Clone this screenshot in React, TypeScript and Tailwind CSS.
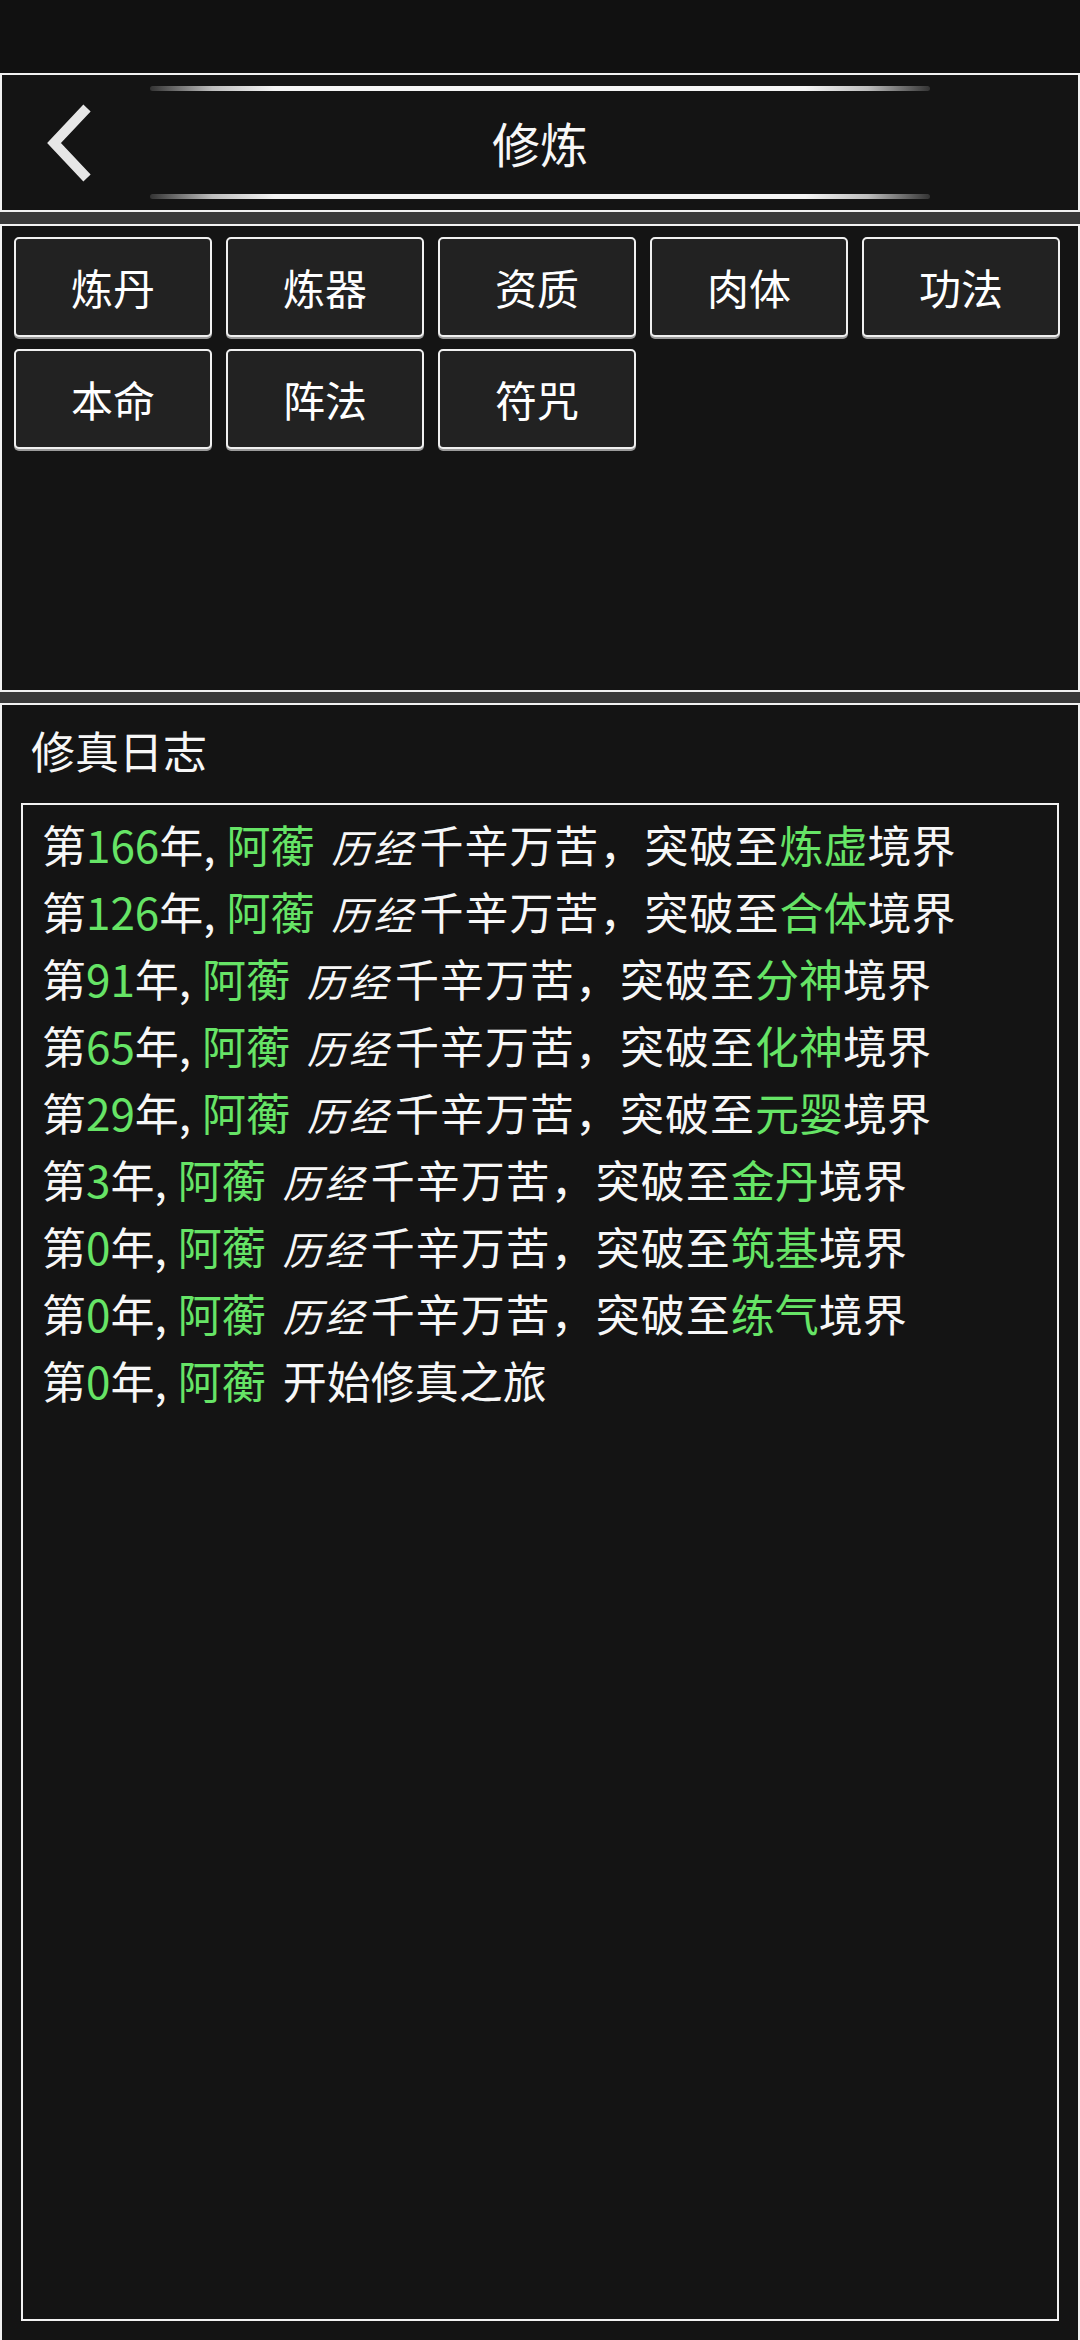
const GREEN = "text-[#66e466]";

type LogEntry = { year: number; realm?: string; text?: string };

const logs: LogEntry[] = [
  { year: 166, realm: "炼虚" },
  { year: 126, realm: "合体" },
  { year: 91, realm: "分神" },
  { year: 65, realm: "化神" },
  { year: 29, realm: "元婴" },
  { year: 3, realm: "金丹" },
  { year: 0, realm: "筑基" },
  { year: 0, realm: "练气" },
  { year: 0, text: "开始修真之旅" },
];

const tabs = ["炼丹", "炼器", "资质", "肉体", "功法", "本命", "阵法", "符咒"];

function GlowLine() {
  return (
    <div className="h-[5px] w-full rounded-full bg-[linear-gradient(to_right,#333333_0%,#bdbdbd_8%,#f4f4f4_16%,#f4f4f4_84%,#bdbdbd_92%,#333333_100%)]" />
  );
}

function BackIcon() {
  return (
    <svg width="100" height="135" viewBox="0 0 100 135" fill="none">
      <polyline points="85,33 52,68 85,103" stroke="#e6e6e6" strokeWidth="10" strokeLinejoin="miter" strokeLinecap="butt" />
    </svg>
  );
}

export default function App() {
  return (
    <div className="w-[1080px] h-[2340px] flex flex-col bg-[#111111] text-[#f7f7f7] font-['Noto_Sans_CJK_SC','Noto_Sans',sans-serif]">
      {/* status bar */}
      <div className="h-[73px] shrink-0 bg-[#111111]" />

      {/* header */}
      <div className="h-[139px] shrink-0 border-2 border-[#f2f2f2] bg-[#141414] grid grid-cols-[148px_1fr_148px]">
        <div className="flex items-center">
          <BackIcon />
        </div>
        <div className="flex flex-col pt-[11px] pb-[11px]">
          <GlowLine />
          <div className="flex-1 flex items-center justify-center text-[48px] leading-none pb-[2px]">修炼</div>
          <GlowLine />
        </div>
        <div />
      </div>

      <div className="h-[12px] shrink-0 bg-[#3a3a3a]" />

      {/* tab buttons */}
      <div className="h-[468px] shrink-0 border-2 border-[#f2f2f2] bg-[#141414] pl-[12px] pt-[11px]">
        <div className="grid grid-cols-[repeat(5,198px)] gap-x-[14px] gap-y-[12px]">
          {tabs.map((t) => (
            <button
              key={t}
              className="h-[100px] rounded-[5px] border-2 border-[#f0f0f0] bg-[#222222] shadow-[0_2px_0_#9a9a9a] flex items-center justify-center text-[42px] leading-none text-white"
            >
              {t}
            </button>
          ))}
        </div>
      </div>

      <div className="h-[11px] shrink-0 bg-[#3a3a3a]" />

      {/* log panel */}
      <div className="flex-1 flex flex-col border-x-2 border-t-2 border-[#f2f2f2] bg-[#141414] px-[19px] pb-[19px]">
        <div className="pl-[10px] pt-[15px] h-[98px] text-[44px] leading-[60px]">修真日志</div>
        <div className="flex-1 border-2 border-[#f2f2f2] pl-[19px] pt-[6px]">
          {logs.map((l, i) => (
            <div key={i} className="h-[67px] text-[44px] leading-[67px] whitespace-nowrap">
              第<span className={GREEN}>{l.year}</span>年,<span className="inline-block w-[11px]" />
              <span className={GREEN}>阿蘅</span>
              <span className="inline-block w-[17px]" />
              {l.text ? (
                l.text
              ) : (
                <>
                  <span className="inline-block w-[88px] text-[39px] leading-none italic tracking-[3px]">历经</span>
                  <span className="tracking-[1px]">千辛万苦，突破至</span>
                  <span className={GREEN}>{l.realm}</span>境界
                </>
              )}
            </div>
          ))}
        </div>
      </div>
    </div>
  );
}
